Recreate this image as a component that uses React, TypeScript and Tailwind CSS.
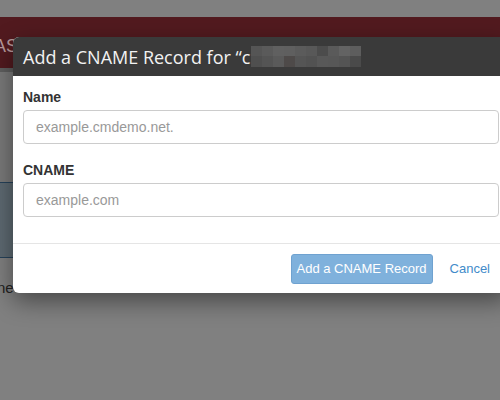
import React from 'react';

const BlurBlock: React.FC = () => {
  const top = ['#555555', '#5a5a5a', '#606060', '#5f5f5f', '#5b5b5b', '#585858', '#4c4c4c', '#5a5a5a', '#636363', '#5d5d5d'];
  const bottom = ['#4f4f4f', '#545454', '#5a5a5a', '#4e4a49', '#555555', '#525252', '#585858', '#575757', '#545454', '#4a4a4a'];
  return (
    <span className="inline-flex flex-col ml-[1px]">
      <span className="flex">
        {top.map((c, i) => (
          <span key={i} className="w-[11px] h-[10px]" style={{ background: c }} />
        ))}
      </span>
      <span className="flex">
        {bottom.map((c, i) => (
          <span key={i} className="w-[11px] h-[11px]" style={{ background: c }} />
        ))}
      </span>
    </span>
  );
};

export default function App() {
  return (
    <div className="relative w-[500px] h-[400px] overflow-hidden bg-[#808080] font-['Liberation_Sans',Arial,sans-serif]">
      {/* page behind the overlay */}
      <div className="flex flex-col">
        <div className="h-[17px] bg-[#808080]" />
        <div className="h-[51px] bg-[#521a1f] flex items-end pb-[13px]">
          <span className="text-[#b79a9c] text-[18px] -ml-[6px] leading-none">AS</span>
        </div>
        <div className="h-[4px] bg-[#5f5f5f]" />
        <div className="h-[110px] bg-[#7a7a7a]" />
        <div className="h-[76px] bg-[#5e6a72] border-y border-[#26425a]" />
        <div className="h-[45px] flex items-end pb-[4px]">
          <span className="text-[#222] text-[15px] -ml-[3px]">ne</span>
        </div>
        <div className="flex-1 bg-[#808080]" />
      </div>

      {/* modal */}
      <div className="absolute left-[13px] top-[37px] w-[496px] rounded-md bg-white shadow-[0_8px_24px_rgba(0,0,0,0.45)] overflow-hidden">
        <div className="h-[39px] bg-[#3a3a3a] flex items-center px-[10px]">
          <span className="text-[#f2f2f2] text-[18px] font-['Open_Sans',sans-serif] leading-none">
            Add a CNAME Record for “c
          </span>
          <BlurBlock />
        </div>
        <div className="px-[10px] pt-[11px] pb-[26px] flex flex-col">
          <label className="text-[14px] font-bold text-[#333] leading-[20px]">Name</label>
          <div className="mt-[3px] h-[34px] border border-[#ccc] rounded-[4px] flex items-center px-[12px] text-[14px] text-[#999]">
            example.cmdemo.net.
          </div>
          <label className="mt-[16px] text-[14px] font-bold text-[#333] leading-[20px]">CNAME</label>
          <div className="mt-[3px] h-[34px] border border-[#ccc] rounded-[4px] flex items-center px-[12px] text-[14px] text-[#999]">
            example.com
          </div>
        </div>
        <div className="border-t border-[#e5e5e5] h-[50px] flex items-center justify-end pr-[19px]">
          <button className="h-[30px] w-[142px] rounded-[3px] bg-[#7fb1dc] border border-[#6fa2d0] text-white text-[13px]">
            Add a CNAME Record
          </button>
          <span className="ml-[17px] text-[#428bca] text-[13px]">Cancel</span>
        </div>
      </div>
    </div>
  );
}
